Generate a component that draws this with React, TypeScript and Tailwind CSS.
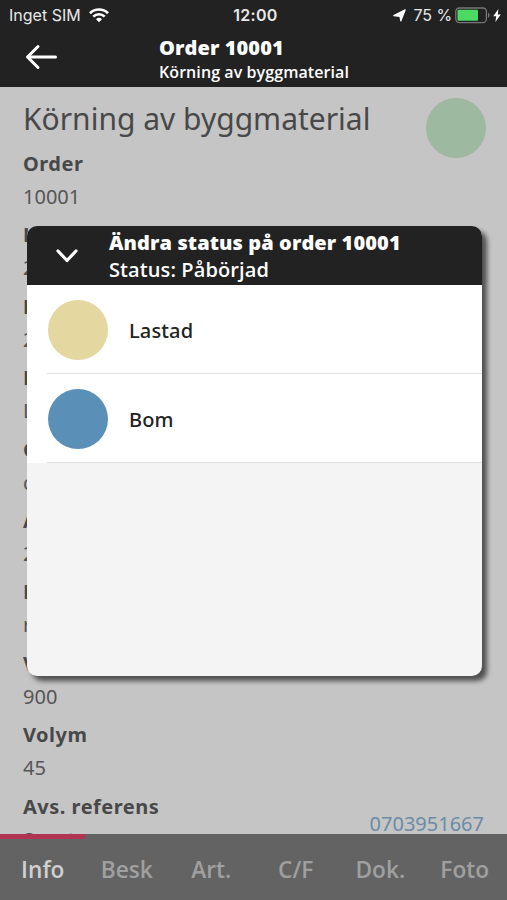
import clsx from "clsx";

type Field = { label: string; value: string };

const fields: Field[] = [
    { label: "Order", value: "10001" },
    { label: "L", value: "2" },
    { label: "L", value: "2" },
    { label: "K", value: "L" },
    { label: "G", value: "c" },
    { label: "A", value: "2" },
    { label: "F", value: "r" },
    { label: "V", value: "900" },
    { label: "Volym", value: "45" },
    { label: "Avs. referens", value: "Svante" },
];

const statuses = [
    { name: "Lastad", color: "bg-[#e4d7a0]" },
    { name: "Bom", color: "bg-[#5a8fb8]" },
];

const tabs = ["Info", "Besk", "Art.", "C/F", "Dok.", "Foto"];

function StatusBar() {
    return (
        <div className="grid h-[30px] grid-cols-3 items-center pl-[9px] pr-[6px] font-['Inter',sans-serif] text-[16px] text-[#e8e8e8]">
            <div className="flex items-center gap-[8px]">
                <span className="whitespace-nowrap">Inget SIM</span>
                <svg width="20" height="15" viewBox="0 0 20 15" fill="none" stroke="#fff" strokeWidth="2.7">
                    <path d="M1 5.2a12.8 12.8 0 0 1 18 0" />
                    <path d="M4.3 8.6a8.1 8.1 0 0 1 11.4 0" />
                    <path d="M7 11.2a4.3 4.3 0 0 1 6 0L10 14.2z" fill="#fff" stroke="none" />
                </svg>
            </div>
            <span className="pl-px text-center font-semibold tracking-[0.3px]">12:00</span>
            <div className="flex items-center justify-end">
                <svg width="13" height="13" viewBox="0 0 13 13" fill="#fff" stroke="#fff" strokeWidth="1.2" strokeLinejoin="round" className="mr-[8px]">
                    <path d="M12.2.8 7.8 12 7 7.4.8 6.6z" />
                </svg>
                <span className="mr-[3px] whitespace-nowrap tracking-[-0.1px]">75 %</span>
                <svg width="37" height="17" viewBox="0 0 37 17">
                    <rect x=".8" y="1" width="30.6" height="14.6" rx="3.5" fill="none" stroke="#777" strokeWidth="1.3" />
                    <rect x="2.5" y="2.8" width="20.5" height="11" rx="1" fill="#4cd964" />
                    <path d="M33 5.8c2 .8 2 4.2 0 5z" fill="#777" />
                </svg>
                <svg width="8" height="13" viewBox="0 0 8 13" fill="#fff" className="ml-px">
                    <path d="M5.4 0 .2 7.2h3L2.4 13 7.8 5.5h-3z" />
                </svg>
            </div>
        </div>
    );
}

function Header() {
    return (
        <header className="h-[87px] shrink-0 bg-[#222] text-white">
            <StatusBar />
            <div className="flex">
                <div className="w-[159px] pl-[25px] pt-[14px]">
                    <svg width="33" height="26" viewBox="0 0 33 26" fill="none" stroke="#fff" strokeWidth="3" strokeLinecap="round" strokeLinejoin="round">
                        <path d="M30.5 13H2.5M13 2.5 2.5 13 13 23.5" />
                    </svg>
                </div>
                <div className="whitespace-nowrap pt-[6px]">
                    <h1 className="text-[20px] leading-[24px] font-extrabold tracking-[0.1px]">Order 10001</h1>
                    <p className="text-[16px] leading-[24px] font-semibold tracking-[0.08px]">Körning av byggmaterial</p>
                </div>
            </div>
        </header>
    );
}

function StatusDialog() {
    return (
        <div className="absolute top-[226px] left-[27px] h-[450px] w-[455px] overflow-hidden rounded-[10px] bg-[#f4f4f4] shadow-[5px_5px_5px_rgba(0,0,0,0.6)]">
            <div className="flex h-[59px] bg-[#222] whitespace-nowrap text-white">
                <div className="w-[82px] pt-[23px] pl-[28px]">
                    <svg width="24" height="14" viewBox="0 0 24 14" fill="none" stroke="#fff" strokeWidth="3.2" strokeLinecap="round" strokeLinejoin="round">
                        <path d="M3 2 12 11.5 21 2" />
                    </svg>
                </div>
                <div className="pt-[3px]">
                    <h2 className="text-[20px] leading-[27px] font-extrabold tracking-[0.1px]">Ändra status på order 10001</h2>
                    <p className="text-[20px] leading-[27px] font-semibold tracking-[0.1px]">Status: Påbörjad</p>
                </div>
            </div>
            <div className="bg-white font-['Noto_Sans',sans-serif]">
                {statuses.map((status) => (
                    <div key={status.name} className="ml-[20px] flex h-[89px] items-center border-b border-[#dedede] pt-[2px] pl-px">
                        <div className={clsx("h-[60px] w-[60px] rounded-full", status.color)} />
                        <span className="mt-[2px] ml-[21px] text-[20px] font-medium tracking-[0.15px] text-[#222]">{status.name}</span>
                    </div>
                ))}
            </div>
        </div>
    );
}

export default function App() {
    return (
        <div className="relative flex h-[900px] w-[507px] flex-col overflow-hidden bg-[#c5c5c5] font-['Open_Sans',sans-serif]">
            <Header />

            {/* Order details */}
            <main className="min-h-0 flex-1 overflow-hidden pr-[21px] pl-[23px] font-['Noto_Sans',sans-serif] text-[#484848]">
                <div className="flex h-[60px] items-start justify-between">
                    <h2 className="pt-[11px] text-[30px] leading-[42px] whitespace-nowrap">Körning av byggmaterial</h2>
                    <div className="mt-[11px] h-[60px] w-[60px] shrink-0 rounded-full bg-[#9db99f]" />
                </div>
                <dl className="text-[20px] leading-[33px]">
                    {fields.map((field, i) => (
                        <div key={i} className="h-[71.4px]">
                            <dt className="font-bold tracking-[0.5px]">{field.label}</dt>
                            <dd className="flex justify-between text-[#555]">
                                {field.value}
                                {field.label === "Avs. referens" && (
                                    <span className="-mt-[16px] mr-[2px] text-[#6b8ba6]">0703951667</span>
                                )}
                            </dd>
                        </div>
                    ))}
                </dl>
            </main>

            {/* Bottom tabs */}
            <nav className="grid h-[66px] shrink-0 grid-cols-6 bg-[#636363]">
                {tabs.map((tab, i) => (
                    <div
                        key={tab}
                        className={clsx(
                            "border-t-[5px] pt-[14px] text-center text-[22.7px] leading-[34px] font-semibold",
                            i === 0 ? "border-[#b03454] pl-px text-[#d0d0d0]" : "border-transparent text-[#a0a0a0]"
                        )}
                    >
                        {tab}
                    </div>
                ))}
            </nav>

            <StatusDialog />
        </div>
    );
}
